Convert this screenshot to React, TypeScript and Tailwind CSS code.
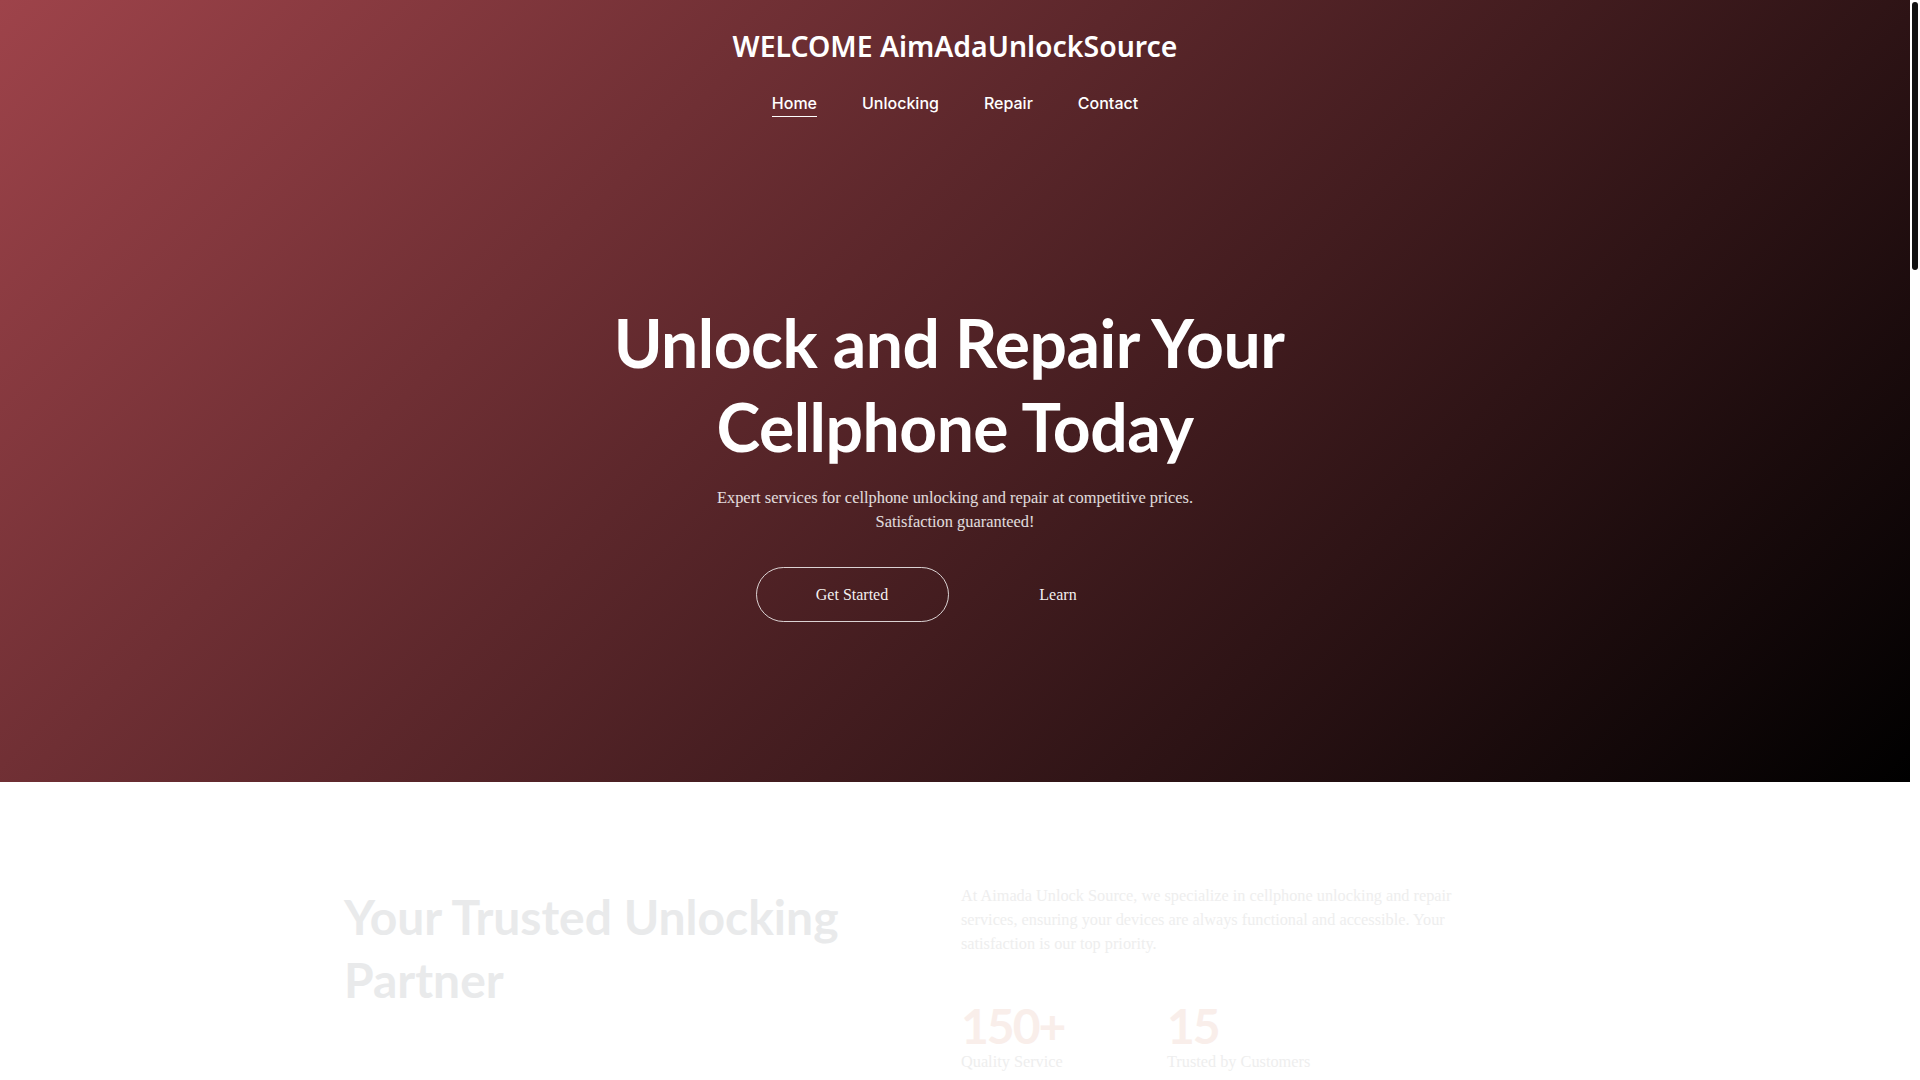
export default function App() {
  return (
    <div className="flex h-screen overflow-hidden bg-white">
      <div className="flex-1 min-w-0 overflow-hidden">
        <div className="min-h-[4300px]">
          <section className="h-[782px] bg-[linear-gradient(135deg,#9e434a_0%,#000000_100%)] flex flex-col items-center text-white">
            <header className="pt-[28px] flex flex-col items-center">
              <h1 className="font-['Noto_Sans',sans-serif] font-semibold text-[28.4px] leading-[36px] text-white">
                WELCOME AimAdaUnlockSource
              </h1>
              <nav className="mt-[27px] flex items-start gap-[45px] font-['Inter',sans-serif] font-medium text-[16px] leading-[24px]">
                <a className="border-b-[1.5px] border-white pb-[1px] text-white">Home</a>
                <a className="text-white">Unlocking</a>
                <a className="text-white">Repair</a>
                <a className="text-white">Contact</a>
              </nav>
            </header>

            <div className="mt-[184px] flex flex-col items-center">
              <h2 className="flex flex-col items-center text-center font-['Lato',sans-serif] font-bold text-[66px] leading-[84px] tracking-[-0.5px] text-white">
                <span className="pr-[12px]">Unlock and Repair Your</span>
                <span>Cellphone Today</span>
              </h2>
              <p className="mt-[17px] w-[540px] text-center font-['Liberation_Serif',serif] text-[16.4px] leading-[24px] text-white/85">
                Expert services for cellphone unlocking and repair at competitive prices. Satisfaction guaranteed!
              </p>
              <div className="mt-[33px] flex gap-[13px] font-['Liberation_Serif',serif] text-[16px]">
                <button className="w-[193px] h-[55px] rounded-full border border-white/80 text-white/95">
                  Get Started
                </button>
                <button className="w-[193px] h-[55px] rounded-full border border-transparent text-white/95">
                  Learn
                </button>
              </div>
            </div>
          </section>

          <section className="pt-[102px] pb-[120px]">
            <div className="mx-auto w-[1222px] flex">
              <div className="w-[617px]">
                <h2 className="mt-[1px] font-['Lato',sans-serif] font-bold text-[48px] leading-[63px] text-[#e9eaeb]">
                  Your Trusted Unlocking<br />Partner
                </h2>
              </div>
              <div className="w-[520px]">
                <p className="font-['Liberation_Serif',serif] text-[16.3px] leading-[24px] text-[#eeeeee]">
                  At Aimada Unlock Source, we specialize in cellphone unlocking and repair services, ensuring your devices are always functional and accessible. Your satisfaction is our top priority.
                </p>
                <div className="mt-[46px] flex">
                  <div className="w-[206px]">
                    <div className="font-['Lato',sans-serif] font-bold text-[48px] leading-[48px] tracking-[-2px] text-[#f9eeea]">150+</div>
                    <div className="font-['Liberation_Serif',serif] text-[16.3px] leading-[24px] text-[#eeeeee]">Quality Service</div>
                  </div>
                  <div>
                    <div className="font-['Lato',sans-serif] font-bold text-[48px] leading-[48px] tracking-[-2px] text-[#f9eeea]">15</div>
                    <div className="font-['Liberation_Serif',serif] text-[16.3px] leading-[24px] text-[#eeeeee]">Trusted by Customers</div>
                  </div>
                </div>
              </div>
            </div>
          </section>
        </div>
      </div>
      <aside className="w-[10px] shrink-0 bg-white">
        <div className="mx-[2px] mt-[2px] h-[268px] rounded-full bg-[#111111]" />
      </aside>
    </div>
  );
}
